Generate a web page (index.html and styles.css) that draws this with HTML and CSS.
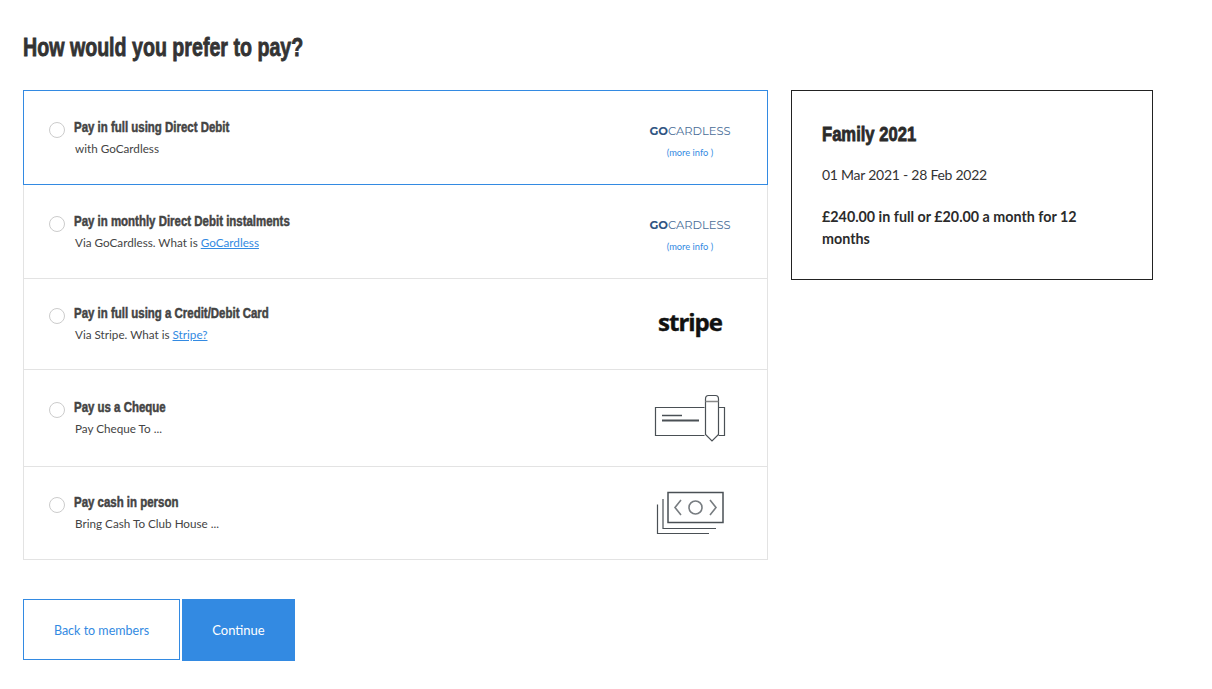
FILE: index.html
```html
<!DOCTYPE html>
<html>
<head>
    <title>Payment</title>
    <link rel="stylesheet" href="styles.css">
</head>
<body>
    <h1>How would you prefer to pay?</h1>

    <div class="layout">
        <div class="main-col">
            <div class="options">
                <div class="option option-active">
                    <span class="radio"></span>
                    <div class="option-text">
                        <h4>Pay in full using Direct Debit</h4>
                        <p>with GoCardless</p>
                    </div>
                    <div class="option-logo">
                        <span class="gc-logo"><b>GO</b>CARDLESS</span>
                        <a class="more-info" href="#">(more info )</a>
                    </div>
                </div>
                <div class="option option-monthly">
                    <span class="radio"></span>
                    <div class="option-text">
                        <h4>Pay in monthly Direct Debit instalments</h4>
                        <p>Via GoCardless. What is <a href="#">GoCardless</a></p>
                    </div>
                    <div class="option-logo">
                        <span class="gc-logo"><b>GO</b>CARDLESS</span>
                        <a class="more-info" href="#">(more info )</a>
                    </div>
                </div>
                <div class="option option-card">
                    <span class="radio"></span>
                    <div class="option-text">
                        <h4>Pay in full using a Credit/Debit Card</h4>
                        <p>Via Stripe. What is <a href="#">Stripe?</a></p>
                    </div>
                    <div class="option-logo">
                        <span class="stripe-logo">stripe</span>
                    </div>
                </div>
                <div class="option option-cheque">
                    <span class="radio"></span>
                    <div class="option-text">
                        <h4>Pay us a Cheque</h4>
                        <p>Pay Cheque To ...</p>
                    </div>
                    <div class="option-logo">
                        <svg class="icon-cheque" width="72" height="48" viewBox="0 0 72 48" fill="none" stroke="#4a5055" stroke-width="1.200">
                            <path d="M50.500 13.500H1.500V41.500H50.500M64.500 13.500H70.500V41.500H64.500"/>
                            <path d="M8 21.500H28" stroke-width="1.500"/>
                            <path d="M8 26.500H45" stroke-width="2"/>
                            <path d="M51.500 5C51.500 2.500 52.500 1.500 54.500 1.500H61.500C63.500 1.500 64.500 2.500 64.500 5V40.500L58 47L51.500 40.500Z"/>
                            <path d="M51.500 7.500H64.500" stroke="#888" stroke-width="1.500"/>
                        </svg>
                    </div>
                </div>
                <div class="option option-cash">
                    <span class="radio"></span>
                    <div class="option-text">
                        <h4>Pay cash in person</h4>
                        <p>Bring Cash To Club House ...</p>
                    </div>
                    <div class="option-logo">
                        <svg class="icon-cash" width="68" height="44" viewBox="0 0 68 44" fill="none" stroke="#4a5055" stroke-width="1.200">
                            <rect x="12" y="1.500" width="55" height="30" stroke-width="1.500"/>
                            <path d="M7 8V37.500H60"/>
                            <path d="M1.500 13.500V42.500H53"/>
                            <circle cx="39.500" cy="16.500" r="6.500" stroke="#777c80" stroke-width="1.600"/>
                            <path d="M25 9L19 16.500L25 24M54 9L60 16.500L54 24" stroke="#777c80" stroke-width="1.600"/>
                        </svg>
                    </div>
                </div>
            </div>

            <div class="actions">
                <a class="btn btn-back" href="#">Back to members</a>
                <a class="btn btn-continue" href="#">Continue</a>
            </div>
        </div>

        <div class="summary">
            <h3>Family 2021</h3>
            <p class="dates">01 Mar 2021 - 28 Feb 2022</p>
            <p class="price">£240.00 in full or £20.00 a month for 12 months</p>
        </div>
    </div>
</body>
</html>
```

FILE: styles.css
```css
body {
    margin: 0;
    padding: 0 23px;
    font-family: Lato, "Open Sans", sans-serif;
    color: #333;
    background-color: #fff;
}

/* no condensed font installed, so the headings are squeezed */
h1,
h3,
h4 {
    font-family: "Liberation Sans", sans-serif;
    font-weight: 700;
    transform-origin: left center;
}

h1 {
    margin: 0;
    padding-top: 32px;
    font-size: 25px;
    line-height: 30px;
    color: #333;
    -webkit-text-stroke: 0.8px #333;
    transform: scaleX(0.785);
    white-space: nowrap;
}

.layout {
    display: flex;
    align-items: flex-start;
    gap: 23px;
    margin-top: 28px;
}

.main-col {
    width: 745px;
}

.options {
    border-left: 1px solid #e3e3e3;
    border-right: 1px solid #e3e3e3;
}

.option {
    display: flex;
    align-items: flex-start;
    border-bottom: 1px solid #e3e3e3;
    box-sizing: border-box;
    padding-left: 25px;
    margin: 0 -1px;
    border-left: 1px solid transparent;
    border-right: 1px solid transparent;
}

.option-active {
    height: 95px;
    padding-top: 26px;
    border: 1px solid #338ae2;
}

.option-monthly {
    height: 94px;
    padding-top: 26px;
}

.option-card {
    height: 91px;
    padding-top: 24px;
}

.option-cheque {
    height: 97px;
    padding-top: 27px;
}

.option-cash {
    height: 93px;
    padding-top: 25px;
}

.radio {
    flex: none;
    width: 14px;
    height: 14px;
    margin-top: 5px;
    border: 1px solid #ccc;
    border-radius: 50%;
}

.option-text {
    flex: 1;
    padding-left: 9px;
}

.option-text h4 {
    margin: 0;
    font-size: 14.500px;
    line-height: 20px;
    color: #444;
    -webkit-text-stroke: 0.5px #444;
    transform: scaleX(0.79);
    white-space: nowrap;
}

.option-text p {
    margin: 1px 0 0;
    padding-left: 1px;
    font-size: 11.700px;
    line-height: 20px;
    color: #444;
}

.option-text a,
.more-info {
    color: #338ae2;
}

.option-logo {
    flex: none;
    box-sizing: border-box;
    width: 156px;
    padding-left: 2px;
    display: flex;
    flex-direction: column;
    align-items: center;
}

.gc-logo {
    margin-top: 6px;
    font-family: Montserrat, "Open Sans", sans-serif;
    font-size: 11.500px;
    line-height: 16px;
    color: #4a6d97;
}

.gc-logo b {
    color: #2f5482;
}

.more-info {
    margin-top: 6px;
    font-size: 9.300px;
    line-height: 16px;
    text-decoration: none;
}

.stripe-logo {
    margin-top: 1px;
    font-family: "Open Sans", sans-serif;
    font-size: 24px;
    line-height: 36px;
    font-weight: 700;
    letter-spacing: -1px;
    color: #111;
    -webkit-text-stroke: 0.4px #111;
}

.icon-cheque {
    margin-top: -3px;
}

.icon-cash {
    margin-top: -1px;
}

.actions {
    display: flex;
    align-items: flex-start;
    gap: 2px;
    margin-top: 39px;
}

.btn {
    display: block;
    box-sizing: border-box;
    text-align: center;
    text-decoration: none;
    font-size: 13px;
}

.btn-back {
    width: 157px;
    height: 61px;
    line-height: 61px;
    font-size: 12.500px;
    color: #338ae2;
    border: 1px solid #338ae2;
}

.btn-continue {
    width: 113px;
    height: 62px;
    line-height: 62px;
    color: #fff;
    background-color: #338ae2;
}

.summary {
    box-sizing: border-box;
    width: 362px;
    height: 190px;
    padding: 30px 30px;
    border: 1px solid #222;
}

.summary h3 {
    margin: 0;
    font-size: 20px;
    line-height: 26px;
    color: #2b2b2b;
    -webkit-text-stroke: 0.8px #2b2b2b;
    transform: scaleX(0.83);
    white-space: nowrap;
}

.dates {
    margin: 18px 0 0;
    font-size: 14px;
    line-height: 20px;
    letter-spacing: -0.25px;
}

.price {
    margin: 21px 0 0;
    max-width: 270px;
    font-size: 14.300px;
    line-height: 22px;
    font-weight: 700;
    color: #2b2b2b;
}
```
